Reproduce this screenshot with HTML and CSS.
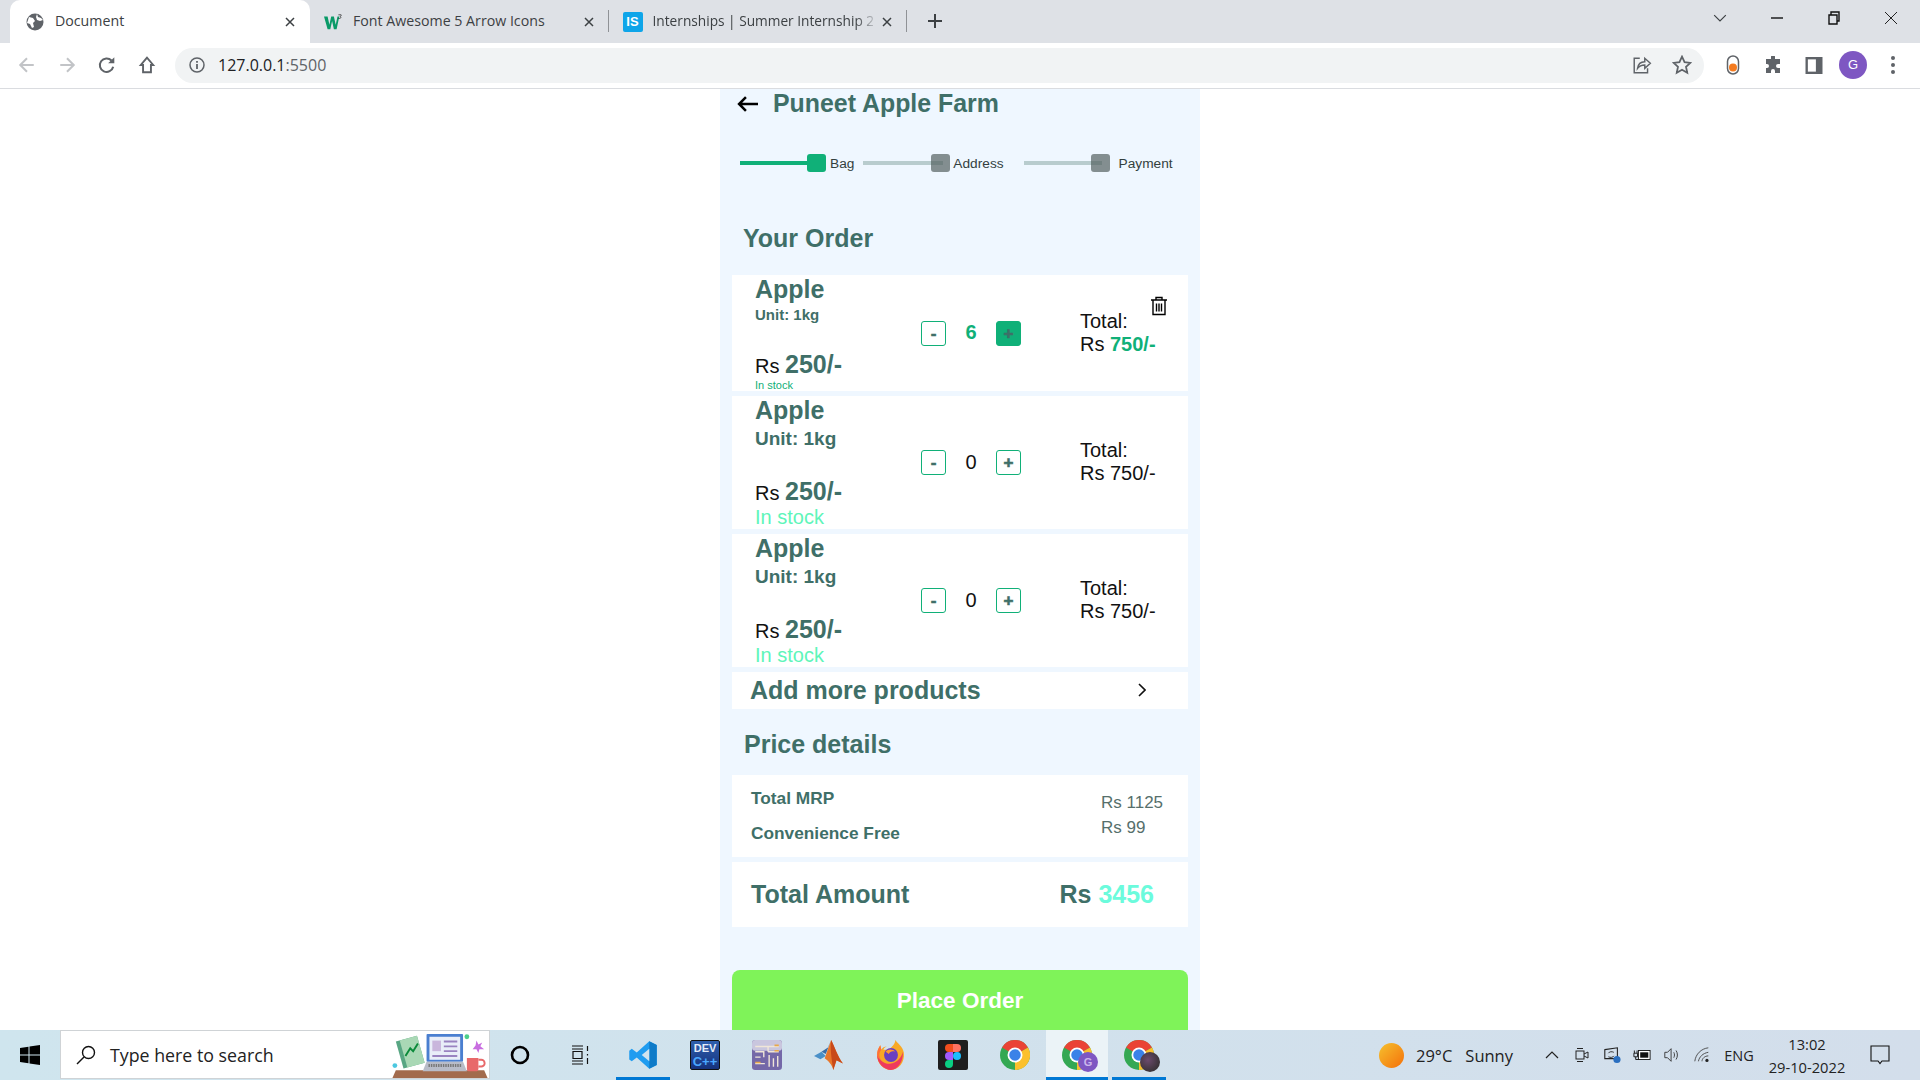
FILE: index.html
```html
<!DOCTYPE html>
<html lang="en">

<head>
    <meta charset="UTF-8">
    <meta name="viewport" content="width=device-width, initial-scale=1.0">
    <title>Document</title>
    <link rel="stylesheet" href="styles.css">
</head>

<body>
    <svg class="defs" aria-hidden="true">
        <symbol id="chrome" viewBox="0 0 24 24">
            <circle cx="12" cy="12" r="12" fill="#34a853" />
            <path d="M12 12L1.6 6A12 12 0 0 1 22.4 6Z" fill="#ea4335" />
            <path d="M12 12L22.4 6A12 12 0 0 1 12 24Z" fill="#fbc02d" />
            <circle cx="12" cy="12" r="6" fill="#fff" />
            <circle cx="12" cy="12" r="4.6" fill="#3b82e8" />
        </symbol>
        <symbol id="close" viewBox="0 0 12 12">
            <path d="M2 2l8 8M10 2l-8 8" stroke="#3c4043" stroke-width="1.5" fill="none" />
        </symbol>
    </svg>

    <!-- Browser -->
    <div class="tabstrip">
        <div class="tab tab-active">
            <svg class="favicon" viewBox="0 0 18 18">
                <circle cx="9" cy="9" r="8.5" fill="#5f6368" />
                <path d="M3 4l4 1 2 3-2 2 1 4-2 1-2-4-3-1zM11 1l1 3 3 1 2 2-3 1-3-1-1-3z" fill="#fff" />
            </svg>
            <span class="tab-title">Document</span>
            <svg class="tab-close"><use href="#close" /></svg>
        </div>
        <div class="tab tab-sep">
            <svg class="favicon" viewBox="0 0 20 18">
                <path d="M0 3h4l2 9 2-9h3l2 9 2-9h2l-3 14h-3L9 8l-2 9H4z" fill="#0a9a68" />
                <path d="M16 1h3v1l-1 1c1 0 1 2-.5 2H16" stroke="#222" stroke-width=".8" fill="none" />
            </svg>
            <span class="tab-title">Font Awesome 5 Arrow Icons</span>
            <svg class="tab-close"><use href="#close" /></svg>
        </div>
        <div class="tab tab-sep">
            <span class="favicon-is">IS</span>
            <span class="tab-title tab-title-fade">Internships | Summer Internship 2</span>
            <svg class="tab-close"><use href="#close" /></svg>
        </div>
        <svg class="new-tab" viewBox="0 0 14 14"><path d="M7 0v14M0 7h14" stroke="#3c4043" stroke-width="2" /></svg>
        <div class="window-btns">
            <svg viewBox="0 0 12 12" class="win-chevron"><path d="M1 3.5l5 5 5-5" stroke="#3c4043" fill="none" /></svg>
            <svg viewBox="0 0 14 14" class="win-min"><path d="M1 7h12" stroke="#111" stroke-width="1.4" /></svg>
            <svg viewBox="0 0 14 14" class="win-restore"><path d="M2 4h8v9H2zM4 4V1h8v9h-2" stroke="#111" stroke-width="1.4" fill="none" /></svg>
            <svg viewBox="0 0 14 14" class="win-close"><path d="M1 1l12 12M13 1L1 13" stroke="#222" fill="none" /></svg>
        </div>
    </div>

    <div class="toolbar">
        <svg class="tool tool-back" viewBox="0 0 16 16"><path d="M14 8H2M8 2L2 8l6 6" stroke="#c2c4c7" stroke-width="1.8" fill="none" /></svg>
        <svg class="tool tool-forward" viewBox="0 0 16 16"><path d="M2 8h12M8 2l6 6-6 6" stroke="#c2c4c7" stroke-width="1.8" fill="none" /></svg>
        <svg class="tool tool-reload" viewBox="0 0 16 16"><path d="M13.5 9.5A6 6 0 1 1 12 4" stroke="#5f6368" stroke-width="1.8" fill="none" /><path d="M14.5 1v5.5H9z" fill="#5f6368" /></svg>
        <svg class="tool tool-home" viewBox="0 0 16 16"><path d="M8 1.500L2.500 8H4.500v6.500h7V8h2z" stroke="#5f6368" stroke-width="1.700" fill="none" /></svg>
        <div class="omnibox">
            <svg class="info" viewBox="0 0 16 16"><circle cx="8" cy="8" r="7" stroke="#5f6368" stroke-width="1.500" fill="none" /><path d="M8 7v5M8 4v1.800" stroke="#5f6368" stroke-width="1.800" /></svg>
            <span class="url">127.0.0.1<span class="url-port">:5500</span></span>
            <svg class="omni-share" viewBox="0 0 18 18"><path d="M7 3H2v13h12v-4" stroke="#5f6368" stroke-width="1.300" fill="none" /><path d="M5 12c.5-4 3-6 6.500-6V3l5 4.500-5 4.500V9c-2.500 0-5 1-6.500 3z" stroke="#5f6368" stroke-width="1.300" fill="none" /></svg>
            <svg class="omni-star" viewBox="0 0 18 18"><path d="M9 1.500l2.300 5 5.200.6-3.900 3.500 1.100 5.300L9 13.200l-4.700 2.700 1.100-5.300L1.500 7.100l5.200-.6z" stroke="#5f6368" stroke-width="1.600" fill="none" /></svg>
        </div>
        <svg class="tool-ext" viewBox="0 0 14 20"><rect x="1.500" y="1" width="11" height="18" rx="5.500" fill="#fff" stroke="#5f6368" stroke-width="1.500" /><circle cx="7" cy="12.500" r="4" fill="#f47b20" /></svg>
        <svg class="tool-puzzle" viewBox="0 0 18 18"><path d="M7 1a2 2 0 0 1 4 0v2h5v5h-2a2 2 0 0 0 0 4h2v5h-5v-2a2 2 0 0 0-4 0v2H2v-5h1a2 2 0 0 0 0-4H2V3h5z" fill="#5f6368" /></svg>
        <svg class="tool-side" viewBox="0 0 18 18"><path d="M0 0h18v18H0z" fill="#5f6368" /><path d="M2.500 2.500h8.500v13H2.500z" fill="#fff" /></svg>
        <span class="avatar">G</span>
        <span class="tool-menu"><i></i><i></i><i></i></span>
    </div>

    <!-- Halaman -->
    <main class="page">
        <div class="panel">
            <div class="title-row">
                <svg class="back-arrow" viewBox="0 0 20 15"><path d="M20 7.500H2M8.500 1L2 7.500 8.500 14" stroke="#000" stroke-width="2.400" fill="none" /></svg>
                <h1 class="farm-name">Puneet Apple Farm</h1>
            </div>

            <div class="stepper">
                <span class="step-line step-line-bag"></span>
                <span class="step-box step-box-on"></span>
                <span class="step-label step-label-bag">Bag</span>
                <span class="step-line step-line-address"></span>
                <span class="step-box step-box-address"></span>
                <span class="step-label step-label-address">Address</span>
                <span class="step-line step-line-payment"></span>
                <span class="step-box step-box-payment"></span>
                <span class="step-label step-label-payment">Payment</span>
            </div>

            <h2 class="section-title">Your Order</h2>

            <div class="item item-first">
                <div class="item-info">
                    <div>
                        <div class="item-name">Apple</div>
                        <div class="item-unit">Unit: 1kg</div>
                    </div>
                    <div>
                        <div class="item-price">Rs <b>250/-</b></div>
                        <div class="item-stock">In stock</div>
                    </div>
                </div>
                <div class="qty">
                    <button class="qty-btn">-</button>
                    <span class="qty-num qty-num-on">6</span>
                    <button class="qty-btn qty-btn-on">+</button>
                </div>
                <div class="item-total">Total:<br>Rs <b>750/-</b></div>
                <svg class="trash" viewBox="0 0 18 20">
                    <path d="M1 4h16M6 4V1.500h6V4M3 4v14.500h12V4M6.500 7.500v8M9 7.500v8M11.500 7.500v8" stroke="#000" stroke-width="1.400" fill="none" />
                </svg>
            </div>

            <div class="item">
                <div class="item-info">
                    <div>
                        <div class="item-name">Apple</div>
                        <div class="item-unit">Unit: 1kg</div>
                    </div>
                    <div>
                        <div class="item-price">Rs <b>250/-</b></div>
                        <div class="item-stock">In stock</div>
                    </div>
                </div>
                <div class="qty">
                    <button class="qty-btn">-</button>
                    <span class="qty-num">0</span>
                    <button class="qty-btn">+</button>
                </div>
                <div class="item-total">Total:<br>Rs 750/-</div>
            </div>

            <div class="item">
                <div class="item-info">
                    <div>
                        <div class="item-name">Apple</div>
                        <div class="item-unit">Unit: 1kg</div>
                    </div>
                    <div>
                        <div class="item-price">Rs <b>250/-</b></div>
                        <div class="item-stock">In stock</div>
                    </div>
                </div>
                <div class="qty">
                    <button class="qty-btn">-</button>
                    <span class="qty-num">0</span>
                    <button class="qty-btn">+</button>
                </div>
                <div class="item-total">Total:<br>Rs 750/-</div>
            </div>

            <div class="add-more">
                <span>Add more products</span>
                <svg class="chevron" viewBox="0 0 8 14"><path d="M1 1l6 6-6 6" stroke="#111" stroke-width="1.600" fill="none" /></svg>
            </div>

            <h2 class="section-title section-title-price">Price details</h2>

            <div class="price-card">
                <div class="price-labels">
                    <div>Total MRP</div>
                    <div>Convenience Free</div>
                </div>
                <div class="price-values">
                    <div>Rs 1125</div>
                    <div>Rs 99</div>
                </div>
            </div>

            <div class="total-card">
                <span>Total Amount</span>
                <span>Rs <span class="total-num">3456</span></span>
            </div>

            <button class="place-order">Place Order</button>
        </div>
    </main>

    <!-- Taskbar -->
    <footer class="taskbar">
        <div class="task-start">
            <svg viewBox="0 0 20 20"><path d="M0 3l8.500-1.300V9.500H0zM9.500 1.500L20 0v9.500H9.500zM0 10.500h8.500v7.800L0 17zM9.500 10.500H20V20L9.500 18.500z" fill="#000" /></svg>
        </div>
        <div class="task-search">
            <svg class="search-glass" viewBox="0 0 20 20"><circle cx="12.500" cy="7.500" r="6" stroke="#111" stroke-width="1.400" fill="none" /><path d="M8 12l-7 7" stroke="#111" stroke-width="1.500" /></svg>
            <span class="search-text">Type here to search</span>
            <svg class="search-art" viewBox="0 0 100 50">
                <path d="M0 50l4-9h92l4 9z" fill="#a26b4d" />
                <path d="M4 11l22-6 8 28-22 6z" fill="#58a683" />
                <path d="M8 10l18-5 8 28-18 5z" fill="#a9d8b5" />
                <path d="M14 26l5-8 3 3 5-8" stroke="#0a8a3a" stroke-width="2" fill="none" />
                <rect x="36" y="3" width="38" height="29" rx="1" fill="#4a7fd0" />
                <rect x="39" y="6" width="32" height="24" fill="#e9eef8" />
                <rect x="42" y="10" width="9" height="11" fill="#c9b6dc" />
                <path d="M54 11h14M54 16h14M54 21h14M42 26h26" stroke="#9a83c0" stroke-width="2" />
                <path d="M32 42l4-10h38l4 10z" fill="#b8bcc8" />
                <path d="M38 36h34" stroke="#777" stroke-width="3" stroke-dasharray="1.500 1" />
                <path d="M78 28h12v11a3 3 0 0 1-3 3h-6a3 3 0 0 1-3-3z" fill="#e8696a" />
                <path d="M90 30h3a2.500 2.500 0 0 1 0 7h-3" stroke="#e8696a" stroke-width="2" fill="none" />
                <circle cx="78" cy="6" r="2.500" fill="#4ccf8a" />
                <path d="M88 10l2 4 4-2-2 4 4 3-5 0-1 4-2-4-4 0 3-4z" fill="#c86de0" />
                <circle cx="3" cy="36" r="2.500" fill="#4cc8e0" />
            </svg>
        </div>
        <div class="task-slot task-slot-small">
            <svg class="cortana" viewBox="0 0 20 20"><circle cx="10" cy="10" r="8" stroke="#000" stroke-width="2.600" fill="none" /></svg>
        </div>
        <div class="task-slot task-slot-view">
            <svg class="taskview" viewBox="0 0 20 20"><path d="M2 1h11M2 4h11M3 6.500h9v7H3zM2 16h11M2 19h11M17.500 1v5M17.500 9v1.500M17.500 13v6" stroke="#111" stroke-width="1.200" fill="none" /></svg>
        </div>
        <div class="task-slot task-open">
            <svg viewBox="0 0 24 24">
                <path d="M17 1l6 3v16l-6 3L7 14l-4 3-2-1.500V8.500L3 7l4 3z" fill="#1f9cf0" />
                <path d="M17 1l6 3v16l-6 3z" fill="#0f7bc8" />
                <path d="M17 7v10l-6-5z" fill="#d0e3ee" />
            </svg>
        </div>
        <div class="task-slot">
            <div class="devcpp"><span>DEV</span><span class="devcpp-c">C++</span></div>
        </div>
        <div class="task-slot">
            <svg viewBox="0 0 28 28">
                <rect width="28" height="28" rx="3" fill="#7468a8" />
                <rect width="28" height="10" rx="3" fill="#c9c6de" />
                <path d="M3 6h12v5M3 11h8v5M3 16h5M15 6h10M15 11h10M3 22h9M16 14v11M20 17v8M24 15v10" stroke="#f0e6d8" stroke-width="1.300" fill="none" />
                <path d="M21 5h4M21 10h4M3 21h5" stroke="#e8a84a" stroke-width="1.500" />
            </svg>
        </div>
        <div class="task-slot">
            <svg viewBox="0 0 28 28">
                <path d="M0 15l7-4 4 4-5 3z" fill="#4a90c8" />
                <path d="M7 11l6-4 3-7-5 13z" fill="#3a6ea8" />
                <path d="M16 0c3 6 6 15 11 22l-6-3-3 9c-1-5-5-9-8-11z" fill="#e8762a" />
                <path d="M16 0c-1 8 0 14 2 28l3-9 6 3C22 15 19 6 16 0z" fill="#c8491a" />
            </svg>
        </div>
        <div class="task-slot">
            <svg viewBox="0 0 28 28">
                <path d="M18 0c2 3 7 6 8 12 1 9-5 16-12 16S1 22 1 14c0-3 1-6 3-9l1 4c1-2 3-3 5-3-2 1-3 2-3 3h5c3-3 6-5 6-9z" fill="#f9a825" />
                <path d="M25 11c1 9-5 17-11 17S1 22 1 14c3 6 8 9 13 8 6-1 10-6 11-11z" fill="#ef3a5d" />
                <path d="M1 14c0-3 1-6 3-9l1 4c-2 2-3 6 0 10-2-1-4-3-4-5z" fill="#ff7139" />
                <circle cx="14" cy="14" r="6.500" fill="#6a3fc0" />
                <path d="M9 11c2-3 7-3 9 0-3-1-5 0-6 2z" fill="#ff9a2e" />
            </svg>
        </div>
        <div class="task-slot">
            <svg viewBox="0 0 30 30">
                <rect width="30" height="30" rx="2" fill="#1e1e1e" />
                <path d="M15 4h-4a4 4 0 0 0 0 8h4z" fill="#f24e1e" />
                <path d="M15 4h4a4 4 0 0 1 0 8h-4z" fill="#ff7262" />
                <path d="M15 12h-4a4 4 0 0 0 0 8h4z" fill="#a259ff" />
                <circle cx="19" cy="16" r="4" fill="#1abcfe" />
                <path d="M15 20h-4a4 4 0 1 0 4 4z" fill="#0acf83" />
            </svg>
        </div>
        <div class="task-slot"><svg class="chrome-icon"><use href="#chrome" /></svg></div>
        <div class="task-slot task-open task-current">
            <svg class="chrome-icon"><use href="#chrome" /></svg>
            <span class="chrome-badge">G</span>
        </div>
        <div class="task-slot task-open">
            <svg class="chrome-icon"><use href="#chrome" /></svg>
            <span class="chrome-badge chrome-badge-photo"></span>
        </div>

        <div class="tray">
            <span class="sun"></span>
            <span class="weather">29°C</span>
            <span class="weather weather-sunny">Sunny</span>
            <svg class="tray-icon tray-caret" viewBox="0 0 16 16"><path d="M2 11l6-6 6 6" stroke="#222" stroke-width="1.200" fill="none" /></svg>
            <svg class="tray-icon" viewBox="0 0 18 18"><rect x="3" y="5" width="8" height="8" stroke="#222" fill="none" /><path d="M11 8l4-2v6l-4-2M4 2.500h6M4 15.500h6" stroke="#222" fill="none" /></svg>
            <svg class="tray-icon" viewBox="0 0 20 20"><path d="M2 4l14-2v12H2z" stroke="#222" stroke-width="1.200" fill="none" /><path d="M6 8c1-2 4-2 6-1M12 11c-1 2-4 2-6 1" stroke="#222" fill="none" /><circle cx="15.500" cy="15" r="4" fill="#2a6fc0" /></svg>
            <svg class="tray-icon" viewBox="0 0 20 20"><rect x="6" y="5" width="13" height="10" stroke="#111" fill="#fff" /><rect x="8" y="7" width="9" height="6" fill="#111" /><path d="M1 8h4v4H1zM1.500 5v3M4.500 5v3M3 12v3h3" stroke="#111" fill="none" /></svg>
            <svg class="tray-icon" viewBox="0 0 20 20"><path d="M2 7h3l4-4v14l-4-4H2zM12 7c1 2 1 4 0 6M14.500 5c2 3 2 7 0 10" stroke="#333" fill="none" /></svg>
            <svg class="tray-icon" viewBox="0 0 20 20"><path d="M2 17C3 9 9 3 17 2M6 17c1-5 5-9 11-10M10 17c0-3 3-6 7-6" stroke="#444" fill="none" /><circle cx="15.500" cy="16" r="1.800" fill="#222" /></svg>
            <span class="lang">ENG</span>
            <div class="clock">
                <span>13:02</span>
                <span>29-10-2022</span>
            </div>
            <svg class="notify" viewBox="0 0 20 20"><path d="M1 1h18v15h-7l-2 2.500L8 16H1z" stroke="#111" stroke-width="1.100" fill="none" /></svg>
        </div>
    </footer>
</body>

</html>
```
FILE: styles.css
```css
/* Styling Umum */

* {
    box-sizing: border-box;
}

body {
    font-family: 'Liberation Sans', Arial, sans-serif;
    margin: 0;
    height: 100vh;
    display: flex;
    flex-direction: column;
    overflow: hidden;
    background-color: #fff;
}

.defs {
    display: none;
}

/* Browser */

.tabstrip {
    height: 43px;
    flex: none;
    display: flex;
    align-items: flex-end;
    padding-left: 10px;
    background-color: #dee1e6;
    font-family: 'Open Sans', sans-serif;
    font-size: 14.200px;
    color: #3c4043;
}

.tab {
    width: 298.500px;
    height: 43px;
    display: flex;
    align-items: center;
    padding: 0 14px 0 16px;
    position: relative;
}

.tab-active {
    width: 300px;
    background-color: #fff;
    border-radius: 10px 10px 0 0;
}

.tab-sep {
    padding-left: 14px;
}

.tab-sep::after {
    content: "";
    position: absolute;
    right: 0;
    top: 10px;
    height: 22px;
    border-right: 1px solid #8f9296;
}

.favicon {
    width: 18px;
    height: 18px;
    flex: none;
    margin-right: 11px;
}

.favicon-is {
    width: 20px;
    height: 20px;
    flex: none;
    margin-right: 10px;
    border-radius: 2px;
    background-color: #0ea5e9;
    color: #fff;
    font-family: 'Liberation Sans', sans-serif;
    font-weight: bold;
    font-size: 13px;
    line-height: 20px;
    text-align: center;
}

.tab-title {
    flex: 1;
    padding-bottom: 2px;
    white-space: nowrap;
    overflow: hidden;
}

.tab-title-fade {
    font-size: 13.700px;
    -webkit-mask-image: linear-gradient(to right, #000 92%, rgba(0, 0, 0, 0.25));
    mask-image: linear-gradient(to right, #000 92%, rgba(0, 0, 0, 0.25));
}

.tab-close {
    width: 12px;
    height: 12px;
    flex: none;
    margin-left: 8px;
}

.new-tab {
    width: 14px;
    height: 14px;
    margin: 0 0 15px 21px;
}

.window-btns {
    margin-left: auto;
    height: 43px;
    display: flex;
    align-items: center;
    padding: 0 22px 7px 0;
    gap: 43px;
}

.win-chevron,
.win-min,
.win-restore,
.win-close {
    width: 14px;
    height: 14px;
}

.toolbar {
    height: 46px;
    flex: none;
    display: flex;
    align-items: center;
    padding: 0 0 1px 18px;
    background-color: #fff;
    border-bottom: 1px solid #dadce0;
}

.tool {
    width: 18px;
    height: 18px;
    margin-right: 22px;
}

.tool-home {
    margin-right: 19px;
}

.omnibox {
    width: 1529px;
    height: 35px;
    margin-right: 20px;
    display: flex;
    align-items: center;
    padding: 0 12px 0 14px;
    border-radius: 18px;
    background-color: #f1f3f4;
}

.info {
    width: 16px;
    height: 16px;
    margin-right: 13px;
}

.url {
    font-family: 'Open Sans', sans-serif;
    font-size: 16px;
    color: #202124;
    flex: 1;
}

.url-port {
    color: #5f6368;
}

.omni-share {
    width: 20px;
    height: 20px;
    margin-right: 20px;
}

.omni-star {
    width: 20px;
    height: 20px;
}

.tool-ext {
    width: 14px;
    height: 20px;
    margin: 0 24px 0 2px;
}

.tool-puzzle {
    width: 18px;
    height: 18px;
    margin-right: 23px;
}

.tool-side {
    width: 18px;
    height: 17px;
    margin-right: 16px;
}

.avatar {
    width: 28px;
    height: 28px;
    border-radius: 50%;
    background-color: #7e57c2;
    color: #fff;
    font-size: 13px;
    line-height: 28px;
    text-align: center;
    margin-right: 24px;
}

.tool-menu {
    display: flex;
    flex-direction: column;
    gap: 3px;
}

.tool-menu i {
    width: 4px;
    height: 4px;
    border-radius: 50%;
    background-color: #5f6368;
}

/* Halaman */

.page {
    flex: 1;
    min-height: 0;
    overflow: hidden;
    display: flex;
    justify-content: center;
}

.panel {
    width: 480px;
    padding: 0 12px;
    background-color: #eff7ff;
    color: #3f6f68;
}

.title-row {
    height: 29px;
    display: flex;
    align-items: center;
    padding-left: 5px;
}

.back-arrow {
    width: 21px;
    height: 16px;
    margin-right: 15px;
}

.farm-name {
    margin: 0;
    font-size: 24.900px;
    line-height: 29px;
}

.stepper {
    height: 18px;
    margin-top: 36px;
    padding-left: 8px;
    display: flex;
    align-items: center;
}

.step-line {
    height: 4px;
    background-color: #b8ccce;
}

.step-line-bag {
    width: 72px;
    background-color: #10b078;
}

.step-line-address {
    width: 80px;
    margin-left: 9px;
}

.step-line-payment {
    width: 78px;
    margin-left: 20px;
}

.step-box {
    width: 19px;
    height: 18px;
    border-radius: 3px;
    background-color: rgba(80, 92, 92, 0.68);
}

.step-box-on {
    margin-left: -5px;
    background-color: #10b078;
}

.step-box-address {
    margin-left: -12px;
}

.step-box-payment {
    margin-left: -11px;
}

.step-label {
    font-size: 13.700px;
    color: #333f3e;
}

.step-label-bag {
    margin-left: 4px;
}

.step-label-address {
    margin-left: 3px;
}

.step-label-payment {
    margin-left: 9px;
}

.section-title {
    margin: 51px 0 22px 11px;
    font-size: 25px;
    line-height: 30px;
}

.section-title-price {
    margin: 20px 0 16px 12px;
}

/* Item */

.item {
    height: 133px;
    margin-bottom: 5px;
    padding-left: 23px;
    display: flex;
    align-items: center;
    background-color: #fff;
    position: relative;
}

.item-info {
    width: 166px;
    height: 100%;
    flex: none;
    display: flex;
    flex-direction: column;
    justify-content: space-between;
}

.item-name {
    font-size: 25px;
    font-weight: bold;
    line-height: 28px;
}

.item-unit {
    margin-top: 4px;
    font-size: 19px;
    font-weight: bold;
    line-height: 22px;
}

.item-price {
    margin-bottom: -2px;
    font-size: 20px;
    line-height: 28px;
    color: #111;
}

.item-price b {
    font-size: 25px;
    color: #3f6f68;
}

.item-stock {
    font-size: 20px;
    line-height: 24px;
    color: #5ef5b9;
}

.item-first {
    height: 116px;
}

.item-first .item-unit {
    font-size: 15px;
    line-height: 16px;
}

.item-first .item-price {
    margin-bottom: -1px;
}

.item-first .item-stock {
    font-size: 11px;
    line-height: 12px;
    color: #10b078;
}

.qty {
    width: 100px;
    flex: none;
    display: flex;
    align-items: center;
    justify-content: space-between;
}

.qty-btn {
    width: 25px;
    height: 25px;
    padding: 0;
    border: 1px solid #10b078;
    border-radius: 3px;
    background-color: #fff;
    color: #3f6f68;
    font-family: 'Liberation Sans', sans-serif;
    font-size: 17px;
    font-weight: bold;
    line-height: 23px;
    -webkit-text-stroke: 0.6px #3f6f68;
}

.qty-btn-on {
    background-color: #10b078;
}

.qty-num {
    font-size: 20px;
    margin-top: -1px;
    color: #111;
}

.qty-num-on {
    font-weight: bold;
    color: #10b078;
}

.item-total {
    margin: -2px 0 0 59px;
    font-size: 20px;
    line-height: 23px;
    color: #111;
}

.item-first .item-total {
    margin-top: 0;
}

.item-total b {
    color: #10b078;
}

.trash {
    position: absolute;
    top: 21px;
    left: 418px;
    width: 18px;
    height: 20px;
}

.add-more {
    height: 37px;
    padding: 0 42px 0 18px;
    display: flex;
    align-items: center;
    justify-content: space-between;
    background-color: #fff;
    font-size: 25px;
    font-weight: bold;
}

.chevron {
    width: 8px;
    height: 14px;
    margin-top: -1px;
}

/* Harga */

.price-card {
    height: 82px;
    margin-bottom: 5px;
    display: flex;
    justify-content: space-between;
    background-color: #fff;
}

.price-labels {
    padding: 6px 0 0 19px;
    font-size: 17.300px;
    font-weight: bold;
    line-height: 35px;
}

.price-values {
    width: 87px;
    padding-top: 15px;
    font-size: 17px;
    line-height: 25px;
    color: #566f6b;
}

.total-card {
    height: 65px;
    padding: 0 34px 0 19px;
    display: flex;
    align-items: center;
    justify-content: space-between;
    background-color: #fff;
    font-size: 25px;
    font-weight: bold;
}

.total-num {
    color: #6bfbdc;
}

.place-order {
    display: block;
    width: 100%;
    height: 75px;
    margin-top: 43px;
    padding: 0 0 14px;
    border: none;
    border-radius: 8px;
    background-color: #7ff359;
    color: #fff;
    font-family: 'Liberation Sans', sans-serif;
    font-size: 22.500px;
    font-weight: bold;
}

/* Taskbar */

.taskbar {
    height: 50px;
    flex: none;
    display: flex;
    background: linear-gradient(to right, #cfe5ee, #d3deeb);
    font-family: 'Open Sans', sans-serif;
    color: #222;
}

.task-start {
    width: 60px;
    display: flex;
    align-items: center;
    justify-content: center;
}

.task-start svg {
    width: 20px;
    height: 20px;
}

.task-search {
    width: 430px;
    height: 49px;
    display: flex;
    align-items: center;
    padding-left: 15px;
    overflow: hidden;
    background-color: #fff;
    border: 1px solid #cfd3d6;
}

.search-glass {
    width: 20px;
    height: 20px;
    margin-right: 14px;
}

.search-text {
    flex: 1;
    font-size: 17.800px;
}

.search-art {
    width: 98px;
    height: 48px;
    flex: none;
}

.task-slot {
    width: 62px;
    display: flex;
    align-items: center;
    justify-content: center;
    position: relative;
}

.task-slot svg {
    width: 30px;
    height: 30px;
}

.task-slot-small {
    width: 60px;
}

.task-slot-small .cortana {
    width: 20px;
    height: 20px;
}

.task-slot-view .taskview {
    width: 20px;
    height: 20px;
    margin-right: 2px;
}

.task-open::after {
    content: "";
    position: absolute;
    left: 4px;
    right: 4px;
    bottom: 0;
    height: 3px;
    background-color: #0078d4;
}

.task-current {
    background-color: #ebf3f7;
}

.task-current::after {
    left: 0;
    right: 0;
}

.chrome-icon {
    display: block;
}

.chrome-badge {
    position: absolute;
    left: 32px;
    top: 22px;
    width: 20px;
    height: 20px;
    border-radius: 50%;
    background-color: #7e57c2;
    color: #cbb6ec;
    font-family: 'Liberation Sans', sans-serif;
    font-size: 11px;
    font-weight: bold;
    line-height: 20px;
    text-align: center;
}

.chrome-badge-photo {
    background: radial-gradient(circle at 40% 40%, #6b4a6c, #3a3338 70%, #8a8a8a);
}

.devcpp {
    width: 30px;
    height: 30px;
    display: flex;
    flex-direction: column;
    align-items: center;
    border: 1px solid #111;
    border-radius: 2px;
    background: linear-gradient(to bottom, #2e5fae, #16327c);
    font-family: 'Liberation Sans', sans-serif;
    font-size: 11px;
    font-weight: bold;
    line-height: 13px;
    padding-top: 1px;
    color: #e4ecf8;
}

.devcpp-c {
    color: #4aa8ff;
    font-size: 13px;
}

.tray {
    margin-left: auto;
    display: flex;
    align-items: center;
    padding-right: 30px;
    position: relative;
}

.sun {
    width: 25px;
    height: 25px;
    margin-right: 12px;
    border-radius: 50%;
    background: linear-gradient(135deg, #f5c12e, #f5700a);
}

.weather {
    font-size: 16.500px;
    white-space: nowrap;
}

.weather-sunny {
    margin: 0 24px 0 13px;
}

.tray-icon {
    width: 18px;
    height: 18px;
    margin: 0 6px;
}

.tray-caret {
    width: 16px;
    height: 16px;
    margin: 0 7px;
}

.lang {
    width: 40px;
    margin-left: 2px;
    font-size: 14.500px;
    text-align: center;
}

.clock {
    width: 92px;
    margin-left: 2px;
    display: flex;
    flex-direction: column;
    align-items: center;
    gap: 3px;
    font-size: 14.700px;
    line-height: 20px;
}

.notify {
    width: 20px;
    height: 20px;
    margin-left: 17px;
}
```
